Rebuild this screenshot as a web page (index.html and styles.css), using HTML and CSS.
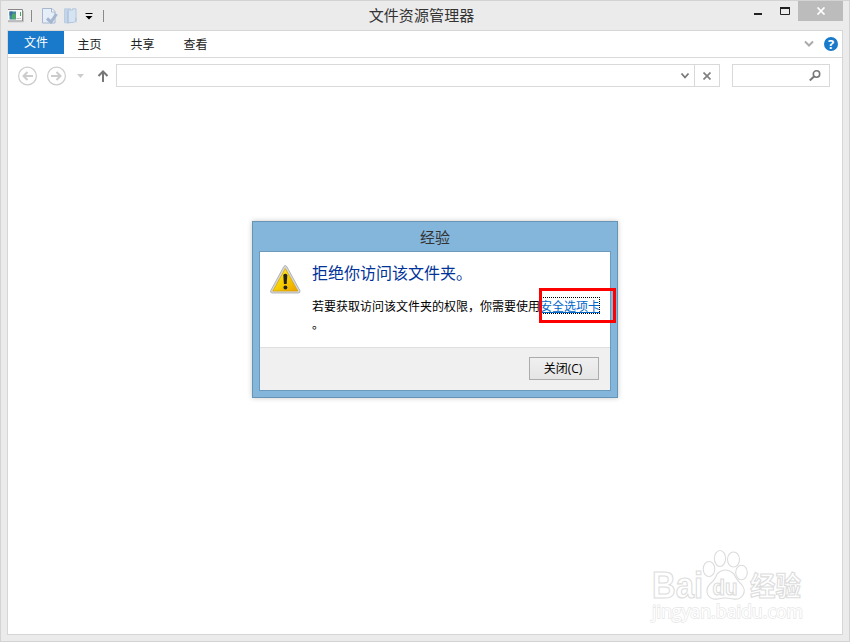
FILE: index.html
```html
<!DOCTYPE html>
<html lang="zh-CN">
<head>
<meta charset="utf-8">
<title>文件资源管理器</title>
<link rel="stylesheet" href="styles.css">
</head>
<body>
<div class="window">
  <header class="titlebar">
    <div class="quick">
      <svg class="app-icon" width="16" height="14" viewBox="0 0 16 14"><path d="M0 .5h14.500v11.500H0" fill="#f8f8f8" stroke="#888"/><path d="M0 12.800h15.500V2" fill="none" stroke="#bbb" stroke-width=".8"/><rect x="1.500" y="2.500" width="6.500" height="8" fill="#438a9a"/><rect x="1.500" y="2.500" width="3" height="4" fill="#3d6fa0"/><path d="M4 5h4v5H4z" fill="#51a76c"/><path d="M12.500 3v4" stroke="#41a65c"/><path d="M8.500 9.500h3M12 9.500h1" stroke="#bbb"/></svg>
      <span class="sep"></span>
      <svg class="prop-icon" width="16" height="16" viewBox="0 0 16 16"><path d="M.5 .5h9.500l3 3V15H.5z" fill="#e6eef8" stroke="#a8b7cf"/><path d="M9.500 1v3H13" fill="#fff" stroke="#a8b7cf"/><path d="M5 10.500l4 3.500 5.500-8" fill="none" stroke="#a5b6d1" stroke-width="3"/></svg>
      <svg class="folder-icon" width="14" height="16" viewBox="0 0 14 16"><path d="M.5 .8h6v14h-6z" fill="#c3d5e9" stroke="#bccde1"/><path d="M4 2h4.500V.8h3.500V12l-2 2.500H4z" fill="#d5e3f2" stroke="#b4c7df"/><path d="M4 3v12.500M12 10v4.500" stroke="#acc1da"/></svg>
      <svg class="more-icon" width="8" height="7" viewBox="0 0 8 7"><path d="M.5 0h7v1H.5zM.5 3h7L4 6.500z" fill="#000"/></svg>
      <span class="sep"></span>
    </div>
    <h1>文件资源管理器</h1>
    <div class="controls">
      <svg width="54" height="20" viewBox="0 0 54 20"><path d="M10 12h8v2h-8z" fill="#222"/><path d="M36.500 6.500h9v7h-9z" fill="none" stroke="#222"/><path d="M36 7h10" stroke="#222" stroke-width="2"/></svg>
      <span class="close"><svg width="10" height="8" viewBox="0 0 10 8"><path d="M1.500.5l7 7M8.500.5l-7 7" stroke="#fff" stroke-width="1.700"/></svg></span>
    </div>
  </header>
  <main class="client">
    <nav class="ribbon">
      <span class="tab active">文件</span><span class="tab">主页</span><span class="tab">共享</span><span class="tab">查看</span>
      <svg class="expand" width="10" height="8" viewBox="0 0 10 8"><path d="M1 1.500l4 4 4-4" fill="none" stroke="#aaa" stroke-width="2"/></svg>
      <span class="help">?</span>
    </nav>
    <div class="address-row">
      <svg class="nav" width="92" height="22" viewBox="0 0 92 22"><g fill="none" stroke="#ccc"><circle cx="11.500" cy="11" r="8.900" stroke-width="1.200"/><circle cx="40.500" cy="11" r="8.900" stroke-width="1.200"/><path d="M17 11H8M11.500 7l-4 4 4 4M35 11h9M40.500 7l4 4-4 4" stroke-width="2"/></g><path d="M61 9h7l-3.500 4z" fill="#ccc"/><path d="M87 17V7M82.500 11l4.500-4.500L91.500 11" fill="none" stroke="#777" stroke-width="2"/></svg>
      <div class="field address">
        <svg class="drop" width="10" height="8" viewBox="0 0 10 8"><path d="M1.500 1.500l3.500 4 3.500-4" fill="none" stroke="#777" stroke-width="1.800"/></svg>
        <span class="stop"><svg width="8" height="8" viewBox="0 0 8 8"><path d="M.5.5l7 7M7.500.5l-7 7" stroke="#808080" stroke-width="1.700"/></svg></span>
      </div>
      <div class="field search"><svg width="12" height="11" viewBox="0 0 12 11"><circle cx="7.500" cy="4" r="3.200" fill="none" stroke="#777" stroke-width="1.600"/><path d="M5 6.500L.8 10.500" stroke="#777" stroke-width="2"/></svg></div>
    </div>
  </main>
</div>

<section class="dialog">
  <h2>经验</h2>
  <div class="panel">
    <div class="message">
      <svg class="warning" width="31" height="29" viewBox="0 0 32 29" preserveAspectRatio="none"><defs><linearGradient id="gold" x2="1" y2="1"><stop stop-color="#fff34c"/><stop offset=".5" stop-color="#f5d000"/><stop offset="1" stop-color="#eea000"/></linearGradient></defs><path d="M14.300 1.500q1.500-2 3 0L30.800 25.500q.8 2.500-1.500 2.500H2.300Q0 28 .8 25.500z" fill="#d8d8d8" stroke="#a0a3a6" stroke-width=".8"/><path d="M15.800 3.500L28.700 26H2.900z" fill="url(#gold)" stroke="#d19b00" stroke-width=".7"/><path d="M13.700 10q2-2.500 4.200 0l-.7 9h-2.800z" fill="#222"/><circle cx="15.900" cy="22.500" r="2" fill="#222"/></svg>
      <div class="copy">
        <h3>拒绝你访问该文件夹。</h3>
        <p>若要获取访问该文件夹的权限，你需要使用<a class="link">安全选项卡</a><br>。</p>
      </div>
    </div>
    <footer><button>关闭(C)</button></footer>
  </div>
  <span class="highlight"></span>
</section>

<svg class="watermark" width="156" height="76" viewBox="0 0 156 76">
  <g fill="#fff" stroke="#dcdcdc" stroke-width="1.100">
    <text class="brand" x="1" y="48" textLength="51" lengthAdjust="spacingAndGlyphs">Bai</text>
    <ellipse cx="58" cy="19" rx="5.800" ry="7.500"/>
    <ellipse cx="69" cy="8.500" rx="5.600" ry="8"/>
    <ellipse cx="82.500" cy="9.500" rx="6" ry="7.500"/>
    <ellipse cx="90.500" cy="22.500" rx="5.800" ry="7.200"/>
    <path d="M66 24q8-8 17 0 2 5 8 11 4 5 1 10-3 5-10 4-8-2-15 0-7 1-10-4-3-6 2-11 5-4 7-10z"/>
    <text class="du" x="61.500" y="45" textLength="25" lengthAdjust="spacingAndGlyphs">du</text>
    <text class="cn" x="99" y="46" textLength="51" lengthAdjust="spacingAndGlyphs">经验</text>
    <text class="url" x="1" y="68" textLength="151" lengthAdjust="spacingAndGlyphs">jingyan.baidu.com</text>
  </g>
</svg>
</body>
</html>
```
FILE: styles.css
```css
* { box-sizing: border-box; }
body { margin: 0; width: 850px; height: 642px; overflow: hidden; font: 12px "Noto Sans CJK SC", sans-serif; color: #222; }
svg { display: block; flex: none; }
h1, h2, h3, p { margin: 0; font-weight: 400; }
.window { width: 850px; height: 642px; padding: 0 6px 6px; border: 1px solid #d3d3d3; background: #ebebeb; display: flex; flex-direction: column; }
.titlebar { height: 29px; display: grid; grid-template-columns: 1fr auto 1fr; }
.titlebar h1 { margin: 0 7px 0 0; font-size: 15px; letter-spacing: .1px; line-height: 27px; color: #333; }
.quick { display: flex; align-items: center; padding-left: 1px; }
.sep { width: 1px; height: 12px; background: #8a8a8a; }
.app-icon { margin-right: 7px; }
.prop-icon { margin-left: 10px; margin-right: 6px; }
.folder-icon { margin-right: 7px; }
.more-icon { margin: 2px 10px 0 0; }
.controls { display: flex; justify-content: flex-end; }
.close { width: 45px; height: 20px; background: #bcbcbc; display: grid; place-items: center; }
.client { flex: 1; border: 1px solid #d6d6d6; background: #fff; }
.ribbon { height: 27px; display: flex; align-items: flex-start; border-bottom: 1px solid #dadada; }
.tab { width: 53px; height: 26px; padding-right: 2px; line-height: 26px; text-align: center; }
.tab.active { width: 56px; height: 23px; padding: 0; line-height: 22px; background: #1979ca; color: #fff; }
.expand { margin: 9px 10px 0 auto; }
.help { width: 14px; height: 14px; margin: 6px 4px 0 0; border-radius: 50%; background: #1979ca; color: #fff; font: bold 13px/14px "Open Sans", sans-serif; text-align: center; }
.address-row { display: flex; align-items: center; padding: 6px 12px 0 8px; }
.field { height: 23px; border: 1px solid #d9d9d9; display: flex; align-items: center; justify-content: flex-end; }
.address { width: 604px; margin-left: 8px; }
.drop { margin-right: 4px; }
.stop { width: 25px; height: 21px; border-left: 1px solid #d9d9d9; display: grid; place-items: center; }
.search { width: 98px; margin-left: 12px; padding-right: 8px; }
.dialog { position: absolute; left: 252px; top: 221px; width: 366px; height: 177px; padding: 0 6px 6px; background: #84b6dc; border: 1px solid #6794b5; box-shadow: 0 0 5px rgba(0,0,0,.22); display: flex; flex-direction: column; }
.dialog h2 { height: 29px; font-size: 15px; line-height: 29px; text-align: center; color: #333; }
.panel { flex: 1; border: 1px solid #6c9abc; background: #fff; display: flex; flex-direction: column; }
.message { flex: 1; display: flex; align-items: flex-start; padding: 13px 0 0 10px; color: #000; }
.copy { margin: -5px 0 0 11px; white-space: nowrap; }
.copy h3 { color: #039; font-size: 16px; line-height: 24px; }
.copy p { line-height: 18px; margin-top: 13px; }
.link { color: #06c; text-decoration: underline; outline: 1px dotted #000; outline-offset: -1px; }
.panel footer { height: 43px; background: #f0f0f0; border-top: 1px solid #dfdfdf; padding: 9px 11px; display: flex; justify-content: flex-end; }
button { width: 70px; height: 23px; padding: 0 2px 0 0; border: 1px solid #acacac; background: linear-gradient(#f0f0f0, #e5e5e5); font: 12px/20px "Open Sans", "Noto Sans CJK SC", sans-serif; color: #000; }
.highlight { position: absolute; left: 286px; top: 66px; width: 77px; height: 35px; border: 3px solid #f00; }
.watermark { position: absolute; left: 651px; top: 550px; overflow: visible; }
.brand { font: bold 36px "Liberation Sans", sans-serif; }
.du { font: bold 22px "Liberation Sans", sans-serif; }
.cn { font: bold 27px "Noto Sans CJK SC", sans-serif; }
.url { font: 18px "Open Sans", sans-serif; stroke: #e6e6e6; stroke-width: 1.4; paint-order: stroke; }
```
